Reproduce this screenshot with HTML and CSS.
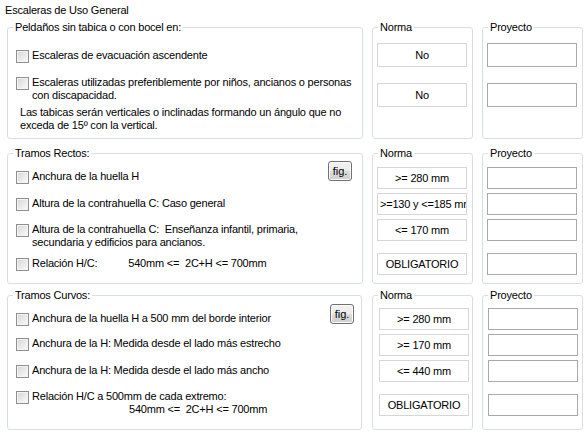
FILE: index.html
```html
<!DOCTYPE HTML>
<html>

<head>
    <meta name="viewport" content="width=device-width, initial-scale=1">
    <title>Escaleras de Uso General</title>
    <link rel="stylesheet" href="styles.css">
</head>

<body>
    <div class="title">Escaleras de Uso General</div>

    <!-- Peldaños -->
    <div class="row row-1">
        <div class="group main">
            <span class="legend">Peldaños sin tabica o con bocel en:</span>
            <div class="group-body">
                <label class="check mt-15"><span class="box"></span><span>Escaleras de evacuación ascendente</span></label>
                <label class="check mt-13"><span class="box"></span><span>Escaleras utilizadas preferiblemente por niños, ancianos o personas<br>con discapacidad.</span></label>
                <p class="note mt-4">Las tabicas serán verticales o inclinadas formando un ángulo que no<br>exceda de 15º con la vertical.</p>
            </div>
        </div>
        <div class="group side">
            <span class="legend">Norma</span>
            <div class="side-body">
                <div class="field ro tall mt-9">No</div>
                <div class="field ro tall mt-16">No</div>
            </div>
        </div>
        <div class="group side">
            <span class="legend">Proyecto</span>
            <div class="side-body">
                <div class="field tall mt-9"></div>
                <div class="field tall mt-16"></div>
            </div>
        </div>
    </div>

    <!-- Tramos rectos -->
    <div class="row row-2">
        <div class="group main">
            <span class="legend">Tramos Rectos:</span>
            <div class="group-body">
                <div class="head mt-1">
                    <label class="check mt-9"><span class="box"></span><span>Anchura de la huella H</span></label>
                    <button class="fig">fig.</button>
                </div>
                <label class="check mt-13"><span class="box"></span><span>Altura de la contrahuella C: Caso general</span></label>
                <label class="check mt-12"><span class="box"></span><span>Altura de la contrahuella C:&nbsp; Enseñanza infantil, primaria,<br>secundaria y edificios para ancianos.</span></label>
                <label class="check mt-8"><span class="box"></span><span>Relación H/C:<span class="formula">540mm &lt;=&nbsp; 2C+H &lt;= 700mm</span></span></label>
            </div>
        </div>
        <div class="group side">
            <span class="legend">Norma</span>
            <div class="side-body">
                <div class="field ro mt-7">&gt;= 280 mm</div>
                <div class="field ro mt-4">&gt;=130 y &lt;=185 mm</div>
                <div class="field ro mt-4">&lt;= 170 mm</div>
                <div class="field ro mt-12">OBLIGATORIO</div>
            </div>
        </div>
        <div class="group side">
            <span class="legend">Proyecto</span>
            <div class="side-body">
                <div class="field mt-7"></div>
                <div class="field mt-4"></div>
                <div class="field mt-4"></div>
                <div class="field mt-12"></div>
            </div>
        </div>
    </div>

    <!-- Tramos curvos -->
    <div class="row row-3">
        <div class="group main">
            <span class="legend">Tramos Curvos:</span>
            <div class="group-body">
                <div class="head mt-2 near">
                    <label class="check mt-8"><span class="box"></span><span>Anchura de la huella H a 500 mm del borde interior</span></label>
                    <button class="fig">fig.</button>
                </div>
                <label class="check mt-11"><span class="box"></span><span>Anchura de la H: Medida desde el lado más estrecho</span></label>
                <label class="check mt-13"><span class="box"></span><span>Anchura de la H: Medida desde el lado más ancho</span></label>
                <label class="check mt-12"><span class="box"></span><span>Relación H/C a 500mm de cada extremo:<br><span class="formula-2">540mm &lt;=&nbsp; 2C+H &lt;= 700mm</span></span></label>
            </div>
        </div>
        <div class="group side">
            <span class="legend">Norma</span>
            <div class="side-body shift">
                <div class="field ro mt-6">&gt;= 280 mm</div>
                <div class="field ro mt-4">&gt;= 170 mm</div>
                <div class="field ro mt-4">&lt;= 440 mm</div>
                <div class="field ro mt-12">OBLIGATORIO</div>
            </div>
        </div>
        <div class="group side">
            <span class="legend">Proyecto</span>
            <div class="side-body shift-1">
                <div class="field mt-6"></div>
                <div class="field mt-4"></div>
                <div class="field mt-4"></div>
                <div class="field mt-12"></div>
            </div>
        </div>
    </div>
</body>

</html>
```

FILE: styles.css
```css
html {
    font-family: "Liberation Sans", Arial, sans-serif;
    font-size: 11px;
    line-height: 13px;
    letter-spacing: -0.2px;
    color: #000;
    background: #fff;
}

body {
    margin: 0;
    padding: 4px 0 0 7px;
    width: 576px;
}

.title {
    margin-left: -2px;
    height: 13px;
}

.row {
    display: grid;
    grid-template-columns: 356px 101px 101px;
    column-gap: 9px;
}

.row-1 {
    margin-top: 10px;
    height: 112px;
}

.row-2 {
    margin-top: 14px;
    height: 131px;
}

.row-3 {
    margin-top: 11px;
    height: 135px;
}

.group {
    border: 1px solid #d5dfe5;
    border-radius: 3px;
    box-sizing: border-box;
    display: flex;
    flex-direction: column;
    align-items: flex-start;
}

.row-3 .main {
    width: 355px;
}

.legend {
    display: block;
    margin: -7px 0 0 5px;
    padding: 0 2px;
    background: #fff;
    white-space: nowrap;
}

.group-body {
    display: flex;
    flex-direction: column;
    align-self: stretch;
    padding: 0 10px 0 8px;
}

.check {
    display: flex;
    align-items: flex-start;
    gap: 3px;
    white-space: nowrap;
}

.box {
    flex: none;
    width: 13px;
    height: 13px;
    margin-top: 1px;
    box-sizing: border-box;
    border: 1px solid #8e8f8f;
    background: linear-gradient(135deg, #d6d6d6 0%, #f0f0f0 70%, #fafafa 100%);
    box-shadow: inset 0 0 0 1px #f4f4f4;
}

.note {
    margin-bottom: 0;
    margin-left: 4px;
    white-space: nowrap;
}

.formula {
    margin-left: 31px;
}

.formula-2 {
    margin-left: 97px;
}

.head {
    display: flex;
    justify-content: space-between;
    align-items: flex-start;
}

.near {
    margin-right: -3px;
}

.fig {
    width: 24px;
    height: 20px;
    padding: 0;
    font-family: inherit;
    font-size: 11px;
    letter-spacing: 0;
    color: #000;
    border: 1px solid #707070;
    border-radius: 3px;
    background: linear-gradient(#f2f2f2 0%, #ebebeb 50%, #dddddd 50%, #cfcfcf 100%);
    box-shadow: inset 0 0 0 1px #fcfcfc;
}

.side-body {
    display: flex;
    flex-direction: column;
    padding-left: 4px;
}

.shift {
    padding-left: 6px;
}

.shift-1 {
    padding-left: 5px;
}

.field {
    width: 90px;
    height: 22px;
    box-sizing: border-box;
    padding: 0 2px;
    border: 1px solid #a9a9a9;
    background: #fff;
    line-height: 20px;
    text-align: center;
    white-space: nowrap;
    overflow: hidden;
}

.field.ro {
    border-color: #d6d6d6;
}

.tall {
    height: 24px;
    line-height: 22px;
}

.mt-1 { margin-top: 1px; }
.mt-2 { margin-top: 2px; }
.mt-4 { margin-top: 4px; }
.mt-6 { margin-top: 6px; }
.mt-7 { margin-top: 7px; }
.mt-8 { margin-top: 8px; }
.mt-9 { margin-top: 9px; }
.mt-10 { margin-top: 10px; }
.mt-11 { margin-top: 11px; }
.mt-12 { margin-top: 12px; }
.mt-13 { margin-top: 13px; }
.mt-14 { margin-top: 14px; }
.mt-15 { margin-top: 15px; }
.mt-16 { margin-top: 16px; }
.mt-17 { margin-top: 17px; }
```
